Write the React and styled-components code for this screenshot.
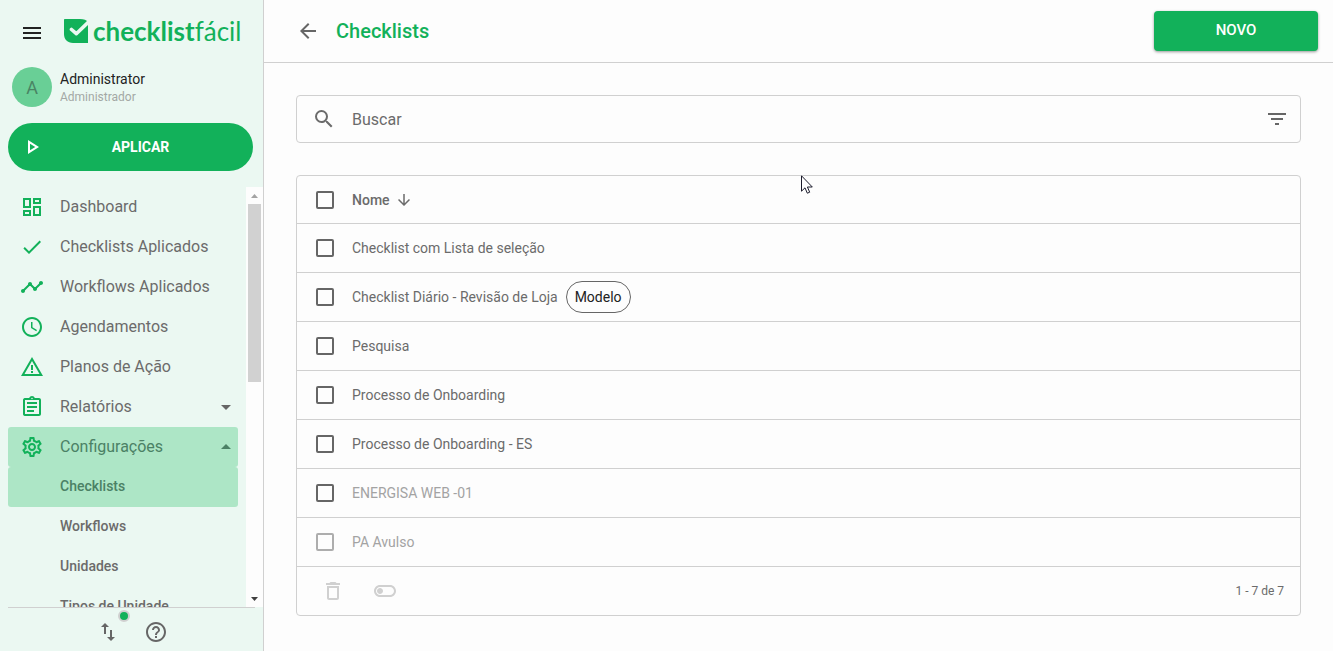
import { useState } from "react";
import styled, { createGlobalStyle } from "styled-components";
import {
  MdMenu,
  MdOutlineDashboard,
  MdCheck,
  MdTimeline,
  MdAccessTime,
  MdWarningAmber,
  MdOutlineAssignment,
  MdOutlineSettings,
  MdArrowDropDown,
  MdArrowDropUp,
  MdOutlinePlayArrow,
  MdImportExport,
  MdHelpOutline,
  MdArrowBack,
  MdArrowDownward,
  MdSearch,
  MdFilterList,
  MdDeleteOutline,
  MdOutlineToggleOff,
} from "react-icons/md";

const GlobalStyle = createGlobalStyle`
  * {
    box-sizing: border-box;
  }
  body {
    margin: 0;
    background: #fdfdfd;
    color: #6b6b6b;
    font-family: Roboto, "Liberation Sans", sans-serif;
    font-size: 14px;
  }
  button, input {
    font-family: inherit;
  }
  svg {
    display: block;
    flex-shrink: 0;
  }
`;

const Layout = styled.div`
  display: flex;
  height: 100vh;
`;

const Sidebar = styled.aside`
  display: flex;
  flex-direction: column;
  width: 264px;
  flex-shrink: 0;
  background: #ebf8f2;
  border-right: 1px solid #d0d0d0;
`;

const IconButton = styled.button`
  position: relative;
  display: flex;
  padding: 0;
  border: 0;
  background: none;
  color: ${props => props.$color || "#666"};
  font-size: 24px;
  cursor: pointer;
  &:disabled {
    color: #d0d0d0;
    cursor: default;
  }
`;

const Brand = styled.div`
  display: flex;
  align-items: center;
  gap: 20px;
  height: 67px;
  padding: 0 0 2px 20px;
`;

const Logo = styled.a`
  display: flex;
  align-items: center;
  gap: 5px;
  padding-bottom: 4px;
  color: #12b15a;
  text-decoration: none;
`;

const LogoText = styled.span`
  font-family: Lato, sans-serif;
  font-size: 26px;
  font-weight: 400;
  line-height: 24px;
  b {
    font-weight: 700;
  }
`;

const Profile = styled.div`
  display: flex;
  align-items: center;
  gap: 8px;
  padding: 0 12px;
`;

const Avatar = styled.div`
  display: flex;
  align-items: center;
  justify-content: center;
  width: 40px;
  height: 40px;
  border-radius: 50%;
  background: #69cf96;
  color: #4a8464;
  font-size: 18px;
`;

const UserName = styled.div`
  color: #222;
  line-height: 20px;
`;

const UserRole = styled.div`
  color: #a3a8a5;
  font-size: 12px;
  line-height: 16px;
`;

const ApplyButton = styled.button`
  display: flex;
  align-items: center;
  height: 48px;
  margin: 16px 10px 16px 8px;
  padding: 0 32px 0 12px;
  border: 0;
  border-radius: 24px;
  background: #12b15a;
  color: #fff;
  font-size: 14px;
  font-weight: 700;
  cursor: pointer;
  svg {
    font-size: 24px;
  }
  span {
    flex: 1;
    padding-left: 16px;
  }
`;

const MenuArea = styled.div`
  display: flex;
  flex: 1;
  min-height: 0;
`;

const Menu = styled.nav`
  flex: 1;
  padding: 0 8px;
  overflow: hidden;
`;

const MenuItem = styled.a`
  display: flex;
  align-items: center;
  gap: 16px;
  height: 40px;
  padding-left: 12px;
  border-radius: 3px;
  background: ${props => (props.$active ? "#ade6c6" : "none")};
  color: ${props => (props.$active ? "#4b8165" : "#6b6b6b")};
  font-size: 16px;
  text-decoration: none;
  svg {
    color: #12b15a;
    font-size: 24px;
  }
  svg:last-child {
    color: ${props => (props.$active ? "#4b8165" : "#666")};
  }
  span {
    flex: 1;
    padding-bottom: 2px;
  }
`;

const SubItem = styled(MenuItem)`
  padding-left: 52px;
  font-size: 14px;
  font-weight: 500;
`;

const ScrollRail = styled.div`
  display: flex;
  flex-direction: column;
  align-items: center;
  width: 17px;
  background: #fdfdfd;
`;

const ScrollArrow = styled.div`
  display: flex;
  align-items: center;
  height: 17px;
  color: ${props => (props.$dim ? "#a3a3a3" : "#404040")};
`;

const ScrollTrack = styled.div`
  flex: 1;
  width: 13px;
`;

const ScrollThumb = styled.div`
  height: 46%;
  background: #d1d1d1;
`;

const SidebarFooter = styled.div`
  display: flex;
  align-items: center;
  justify-content: center;
  gap: 24px;
  height: 44px;
  margin: 0 8px;
  padding-top: 4px;
  border-top: 1px solid #d0d0d0;
`;

const StatusDot = styled.span`
  position: absolute;
  top: -10px;
  right: -10px;
  width: 12px;
  height: 12px;
  border: 2px solid #d0d0d0;
  border-radius: 50%;
  background: #12b15a;
`;

const Main = styled.main`
  display: flex;
  flex: 1;
  flex-direction: column;
  min-width: 0;
`;

const Header = styled.header`
  display: flex;
  align-items: center;
  gap: 16px;
  height: 63px;
  padding: 0 15px 0 32px;
  border-bottom: 1px solid #d0d0d0;
`;

const Title = styled.h1`
  flex: 1;
  margin: 0;
  color: #12b15a;
  font-size: 20px;
  font-weight: 500;
`;

const NewButton = styled.button`
  width: 164px;
  height: 40px;
  padding: 0 0 2px;
  border: 0;
  border-radius: 4px;
  background: #12b15a;
  box-shadow: 0 1px 3px rgba(0, 0, 0, 0.4);
  color: #fff;
  font-size: 15px;
  font-weight: 500;
  cursor: pointer;
`;

const Content = styled.div`
  display: flex;
  flex-direction: column;
  gap: 32px;
  padding: 32px;
`;

const SearchBox = styled.div`
  display: flex;
  align-items: center;
  gap: 16px;
  height: 48px;
  padding: 0 11px 0 15px;
  border: 1px solid #d0d0d0;
  border-radius: 4px;
  svg {
    font-size: 24px;
  }
`;

const SearchInput = styled.input`
  flex: 1;
  min-width: 0;
  padding: 0;
  border: 0;
  outline: 0;
  background: none;
  color: #6b6b6b;
  font-size: 16px;
  &::placeholder {
    color: #6b6b6b;
    opacity: 1;
  }
`;

const Panel = styled.section`
  border: 1px solid #d0d0d0;
  border-radius: 4px;
`;

const Table = styled.table`
  width: 100%;
  border-collapse: separate;
  border-spacing: 0;
`;

const Cell = styled.td`
  height: 49px;
  padding: 0;
  border-bottom: 1px solid #d0d0d0;
  color: ${props => (props.$inactive ? "#a3a3a3" : "#6b6b6b")};
  text-align: left;
`;

const HeadCell = styled(Cell)`
  height: 48px;
  font-weight: 500;
`;

const CheckCell = styled(Cell)`
  width: 55px;
  height: 48px;
  padding-left: 19px;
`;

const CellContent = styled.div`
  display: flex;
  align-items: center;
  gap: 8px;
`;

const SortButton = styled.button`
  display: flex;
  align-items: center;
  gap: 5px;
  padding: 0;
  border: 0;
  background: none;
  color: inherit;
  font-size: 14px;
  font-weight: 500;
  cursor: pointer;
  svg {
    font-size: 18px;
  }
`;

const Checkbox = styled.input`
  display: block;
  appearance: none;
  width: 18px;
  height: 18px;
  margin: 0;
  border: 2px solid ${props => (props.disabled ? "#adadad" : "#666")};
  border-radius: 2px;
  &:checked {
    border-color: #12b15a;
    background: #12b15a;
  }
`;

const Chip = styled.span`
  padding: 0 8px;
  border: 1px solid #666;
  border-radius: 16px;
  color: #222;
  line-height: 30px;
`;

const PanelFooter = styled.div`
  display: flex;
  align-items: center;
  gap: 28px;
  height: 48px;
  padding: 0 16px 0 24px;
`;

const Range = styled.span`
  margin-left: auto;
  font-size: 12px;
`;

const Pointer = styled.svg`
  position: absolute;
  top: 175px;
  left: 801px;
  pointer-events: none;
`;

const menuItems = [
  { label: "Dashboard", icon: MdOutlineDashboard },
  { label: "Checklists Aplicados", icon: MdCheck },
  { label: "Workflows Aplicados", icon: MdTimeline },
  { label: "Agendamentos", icon: MdAccessTime },
  { label: "Planos de Ação", icon: MdWarningAmber },
  { label: "Relatórios", icon: MdOutlineAssignment, arrow: MdArrowDropDown },
  { label: "Configurações", icon: MdOutlineSettings, arrow: MdArrowDropUp, active: true },
];

const subItems = ["Checklists", "Workflows", "Unidades", "Tipos de Unidade"];

const checklists = [
  { name: "Checklist com Lista de seleção" },
  { name: "Checklist Diário - Revisão de Loja", tag: "Modelo" },
  { name: "Pesquisa" },
  { name: "Processo de Onboarding" },
  { name: "Processo de Onboarding - ES" },
  { name: "ENERGISA WEB -01", inactive: true },
  { name: "PA Avulso", inactive: true, locked: true },
];

function LogoMark() {
  return (
    <svg width="24" height="24" viewBox="0 0 24 24" aria-hidden="true">
      <path d="M1 0h15c4 0 6.500 1 8 3v21H9c-5.500 0-9-3.500-9-9V1c0-.6.4-1 1-1z" fill="#12b15a" />
      <path d="M7.500 10.500l4.800 4.200L25 2.500" fill="none" stroke="#ebf8f2" strokeWidth="3.600" strokeLinecap="round" strokeLinejoin="round" />
    </svg>
  );
}

function App() {
  const [selected, setSelected] = useState([]);
  const [search, setSearch] = useState("");

  const toggle = name => {
    setSelected(selected.includes(name) ? selected.filter(item => item !== name) : [...selected, name]);
  };

  const available = checklists.filter(item => !item.locked).map(item => item.name);
  const allSelected = selected.length === available.length;

  return (
    <>
      <GlobalStyle />
      <Layout>
        <Sidebar>
          <Brand>
            <IconButton $color="#222" aria-label="Menu"><MdMenu /></IconButton>
            <Logo href="#">
              <LogoMark />
              <LogoText><b>checklist</b>fácil</LogoText>
            </Logo>
          </Brand>
          <Profile>
            <Avatar>A</Avatar>
            <div>
              <UserName>Administrator</UserName>
              <UserRole>Administrador</UserRole>
            </div>
          </Profile>
          <ApplyButton>
            <MdOutlinePlayArrow />
            <span>APLICAR</span>
          </ApplyButton>
          <MenuArea>
            <Menu>
              {menuItems.map(({ label, icon: Icon, arrow: Arrow, active }) => (
                <MenuItem key={label} href="#" $active={active}>
                  <Icon />
                  <span>{label}</span>
                  {Arrow && <Arrow />}
                </MenuItem>
              ))}
              {subItems.map(label => (
                <SubItem key={label} href="#" $active={label === "Checklists"}>
                  <span>{label}</span>
                </SubItem>
              ))}
            </Menu>
            <ScrollRail aria-hidden="true">
              <ScrollArrow $dim>
                <svg width="7" height="4" viewBox="0 0 7 4"><path d="M0 4L3.500 0 7 4z" fill="currentColor" /></svg>
              </ScrollArrow>
              <ScrollTrack><ScrollThumb /></ScrollTrack>
              <ScrollArrow>
                <svg width="7" height="4" viewBox="0 0 7 4"><path d="M0 0h7L3.500 4z" fill="currentColor" /></svg>
              </ScrollArrow>
            </ScrollRail>
          </MenuArea>
          <SidebarFooter>
            <IconButton aria-label="Sincronizar">
              <MdImportExport />
              <StatusDot />
            </IconButton>
            <IconButton aria-label="Ajuda"><MdHelpOutline /></IconButton>
          </SidebarFooter>
        </Sidebar>
        <Main>
          <Header>
            <IconButton aria-label="Voltar"><MdArrowBack /></IconButton>
            <Title>Checklists</Title>
            <NewButton>NOVO</NewButton>
          </Header>
          <Content>
            <SearchBox>
              <MdSearch />
              <SearchInput
                type="text"
                placeholder="Buscar"
                aria-label="Buscar"
                value={search}
                onChange={e => setSearch(e.target.value)}
              />
              <IconButton aria-label="Filtrar"><MdFilterList /></IconButton>
            </SearchBox>
            <Panel>
              <Table>
                <thead>
                  <tr>
                    <CheckCell as="th">
                      <Checkbox
                        type="checkbox"
                        aria-label="Selecionar todos"
                        checked={allSelected}
                        onChange={() => setSelected(allSelected ? [] : available)}
                      />
                    </CheckCell>
                    <HeadCell as="th">
                      <SortButton>Nome <MdArrowDownward /></SortButton>
                    </HeadCell>
                  </tr>
                </thead>
                <tbody>
                  {checklists.map(({ name, tag, inactive, locked }) => (
                    <tr key={name}>
                      <CheckCell>
                        <Checkbox
                          type="checkbox"
                          aria-label={name}
                          disabled={locked}
                          checked={selected.includes(name)}
                          onChange={() => toggle(name)}
                        />
                      </CheckCell>
                      <Cell $inactive={inactive}>
                        <CellContent>
                          {name}
                          {tag && <Chip>{tag}</Chip>}
                        </CellContent>
                      </Cell>
                    </tr>
                  ))}
                </tbody>
              </Table>
              <PanelFooter>
                <IconButton disabled aria-label="Excluir"><MdDeleteOutline /></IconButton>
                <IconButton disabled aria-label="Desativar"><MdOutlineToggleOff /></IconButton>
                <Range>1 - 7 de 7</Range>
              </PanelFooter>
            </Panel>
          </Content>
        </Main>
      </Layout>
      <Pointer width="12" height="20" viewBox="0 0 12 20" aria-hidden="true">
        <path d="M.5.800v15.400l3.500-3.400 2.300 5.400 2.400-1-2.300-5.200h4.900z" fill="#fff" stroke="#1b1b2b" />
      </Pointer>
    </>
  );
}

export default App;
